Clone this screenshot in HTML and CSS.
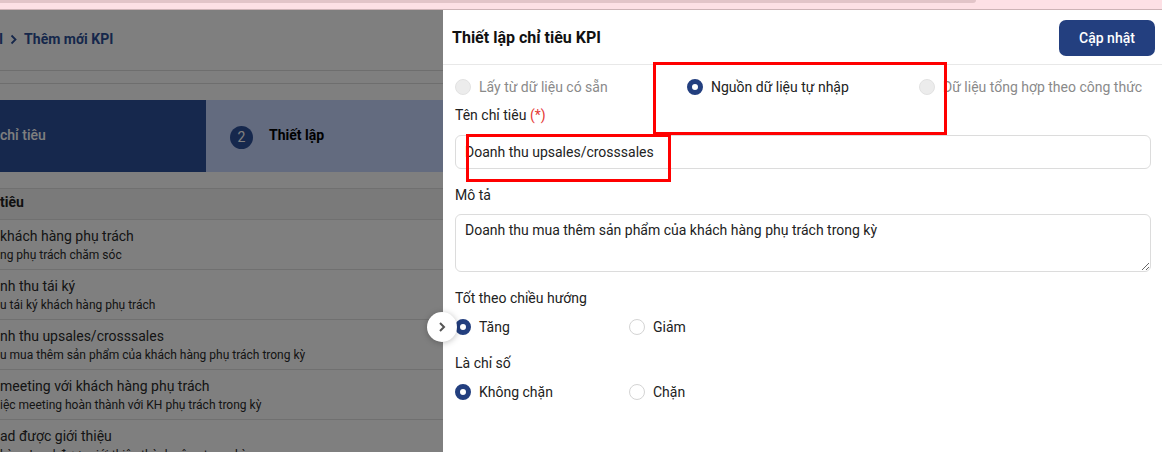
FILE: index.html
```html
<!DOCTYPE html>
<html lang="vi">
<head>
    <meta charset="UTF-8">
    <meta name="viewport" content="width=device-width, initial-scale=1.0">
    <title>Thiết lập chỉ tiêu KPI</title>
    <link rel="stylesheet" href="styles.css">
</head>
<body>
    <div class="browser-strip"><div class="browser-tab"></div></div>

    <div class="app">
        <div class="page">
            <div class="crumb">
                <span>I</span>
                <svg class="crumb-sep" width="7" height="11" viewBox="0 0 7 11"><path d="M1.5 1.5 5.5 5.5 1.5 9.5" fill="none" stroke="currentColor" stroke-width="1.8"/></svg>
                <span>Thêm mới KPI</span>
            </div>
            <div class="subbar"></div>

            <div class="stepper">
                <div class="step step-done">chỉ tiêu</div>
                <div class="step step-active"><span class="step-no">2</span>Thiết lập</div>
            </div>

            <div class="list-head">tiêu</div>
            <div class="kpi-row">
                <div class="kpi-title">khách hàng phụ trách</div>
                <div class="kpi-sub">ng phụ trách chăm sóc</div>
            </div>
            <div class="kpi-row">
                <div class="kpi-title">nh thu tái ký</div>
                <div class="kpi-sub">u tái ký khách hàng phụ trách</div>
            </div>
            <div class="kpi-row">
                <div class="kpi-title">nh thu upsales/crosssales</div>
                <div class="kpi-sub">u mua thêm sản phẩm của khách hàng phụ trách trong kỳ</div>
            </div>
            <div class="kpi-row">
                <div class="kpi-title">meeting với khách hàng phụ trách</div>
                <div class="kpi-sub">iệc meeting hoàn thành với KH phụ trách trong kỳ</div>
            </div>
            <div class="kpi-row">
                <div class="kpi-title">ad được giới thiệu</div>
                <div class="kpi-sub">hàng Lead được giới thiệu thành công trong kỳ</div>
            </div>
        </div>

        <div class="backdrop"></div>

        <div class="drawer">
            <div class="drawer-head">
                <h2 class="drawer-title">Thiết lập chỉ tiêu KPI</h2>
                <button class="btn-primary">Cập nhật</button>
            </div>
            <div class="drawer-body">
                <div class="source-row">
                    <label class="radio disabled"><span class="dot"></span>Lấy từ dữ liệu có sẵn</label>
                    <label class="radio checked"><span class="dot"></span>Nguồn dữ liệu tự nhập</label>
                    <label class="radio disabled"><span class="dot"></span>Dữ liệu tổng hợp theo công thức</label>
                </div>

                <div class="field">
                    <div class="field-label">Tên chỉ tiêu <span class="req">(*)</span></div>
                    <input class="text-input" type="text" value="Doanh thu upsales/crosssales">
                </div>

                <div class="field">
                    <div class="field-label">Mô tả</div>
                    <textarea class="text-area">Doanh thu mua thêm sản phẩm của khách hàng phụ trách trong kỳ</textarea>
                </div>

                <div class="field">
                    <div class="field-label">Tốt theo chiều hướng</div>
                    <div class="choice-row">
                        <label class="radio checked"><span class="dot"></span>Tăng</label>
                        <label class="radio"><span class="dot"></span>Giảm</label>
                    </div>
                </div>

                <div class="field">
                    <div class="field-label">Là chỉ số</div>
                    <div class="choice-row">
                        <label class="radio checked"><span class="dot"></span>Không chặn</label>
                        <label class="radio"><span class="dot"></span>Chặn</label>
                    </div>
                </div>
            </div>
        </div>

        <button class="drawer-toggle">
            <svg width="8" height="12" viewBox="0 0 8 12"><path d="M2 2 6 6 2 10" fill="none" stroke="currentColor" stroke-width="2"/></svg>
        </button>

        <div class="mark mark-source"></div>
        <div class="mark mark-name"></div>
    </div>
</body>
</html>
```

FILE: styles.css
```css
* {box-sizing:border-box}
body {margin:0; font-family:"Roboto", "Noto Sans", sans-serif; font-size:14px; color:#222; overflow:hidden; background:#fff}

.browser-strip {height:10px; background:#fde0e5; border-bottom:1px solid #cdb3b6}
.browser-tab {height:3px; width:976px; background:#e2c4c8; border-bottom-right-radius:4px}

.app {position:relative; height:442px; overflow:hidden}

/* page under the drawer */
.page {width:100%}
.crumb {height:61px; border-bottom:1px solid #dcdcdc; display:flex; align-items:center; gap:7px; padding-bottom:2px; margin-left:-1px; font-size:14px; font-weight:700; color:#2c4f96}
.crumb-sep {color:#2c4f96}
.subbar {height:13px; border-bottom:1px solid #dcdcdc; margin-bottom:16px}

.stepper {display:flex; height:72px; margin-bottom:16px}
.step {display:flex; align-items:center; padding-bottom:3px; font-size:14px; font-weight:500}
.step-done {width:206px; background:#2c509a; color:#fff}
.step-active {flex:1; background:#c6d6fe; color:#000; font-weight:700; padding-left:24px; gap:16px}
.step-no {width:23px; height:23px; border-radius:50%; background:#2c509a; color:#fff; font-weight:400; font-size:14px; display:flex; align-items:center; justify-content:center; margin-top:5px}

.list-head {background:#f4f4f4; border-top:1px solid #e0e0e0; border-bottom:1px solid #e0e0e0; padding:4px 0 8px; line-height:18px; font-weight:700; color:#222}
.kpi-row {height:50px; border-bottom:1px solid #e0e0e0; padding-top:6px}
.kpi-title {font-size:14px; line-height:20px; color:#2a2a2a}
.kpi-sub {font-size:12px; line-height:18px; color:#2a2a2a}

.backdrop {position:absolute; inset:0; background:rgba(0,0,0,0.5)}

/* drawer */
.drawer {position:absolute; top:0; bottom:0; left:443px; right:0; background:#fff}
.drawer-head {height:55px; border-bottom:1px solid #e8e8e8; display:flex; align-items:center; justify-content:space-between; padding:0 7px 0 9px}
.drawer-title {margin:0; font-size:16px; font-weight:700; color:#111}
.btn-primary {width:96px; height:36px; border:none; border-radius:7px; background:#233f7f; color:#fff; font-family:inherit; font-size:14px; font-weight:500; cursor:pointer; margin-top:1px}

.drawer-body {padding:12px 11px 0 12px}
.source-row {display:grid; grid-template-columns:repeat(3, 1fr); margin-bottom:8px}
.choice-row {display:grid; grid-template-columns:repeat(4, 1fr)}

.radio {display:flex; align-items:center; gap:8px; line-height:20px; color:#222; cursor:pointer}
.radio .dot {width:16px; height:16px; border-radius:50%; border:1px solid #d4d4d4; background:#fff; flex:none}
.radio.checked .dot {border:5px solid #233f7f}
.radio.disabled {color:#8a8a8a}
.radio.disabled .dot {background:#ececec; border-color:#e2e2e2}

.field {margin-bottom:16px}
.field-label {line-height:20px; margin-bottom:10px; color:#222}
.req {color:#e53935}
.text-input {display:block; width:100%; height:34px; border:1px solid #dcdcdc; border-radius:6px; padding:0 9px; font-family:inherit; font-size:14px; color:#222}
.text-area {display:block; width:100%; height:58px; border:1px solid #dcdcdc; border-radius:6px; padding:7px 9px; font-family:inherit; font-size:14px; color:#222; resize:vertical}
.field + .field .field-label {margin-bottom:9px}

.drawer-toggle {position:absolute; left:427px; top:302px; width:30px; height:30px; border-radius:50%; border:none; background:#fff; color:#555; box-shadow:0 1px 6px rgba(0,0,0,0.25); display:flex; align-items:center; justify-content:center; padding:0}

/* red annotation boxes */
.mark {position:absolute; border:3px solid #f00}
.mark-source {left:653px; top:52px; width:294px; height:73px}
.mark-name {left:466px; top:124px; width:205px; height:48px}
```
